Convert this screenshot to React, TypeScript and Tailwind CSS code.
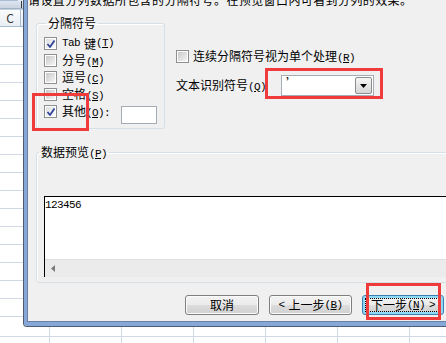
import React from "react";

const cjk = "font-['Noto_Sans_CJK_SC',sans-serif]";
const mono = "font-['Liberation_Mono','Noto_Sans_CJK_SC',monospace] text-[11px] tracking-[-0.6px]";

function Mn({ c }: { c: string }) {
  return (
    <span className={mono}>
      (<span className="underline underline-offset-[1px]">{c}</span>)
    </span>
  );
}

function Check({ checked }: { checked?: boolean }) {
  return (
    <div className="relative w-[13px] h-[13px] shrink-0 border border-[#8e8f8f] bg-white p-[1px]">
      <div
        className={
          checked
            ? "w-full h-full bg-[linear-gradient(135deg,#dedede,#fbfbfb)]"
            : "w-full h-full bg-[linear-gradient(135deg,#c9c9c9,#f5f5f5)]"
        }
      />
      {checked && (
        <svg className="absolute left-[1px] top-[1px]" width="10" height="10" viewBox="0 0 10 10">
          <path d="M1.5 5 L4 8 L8.5 1.5" fill="none" stroke="#30449a" strokeWidth="1.8" strokeLinejoin="round" />
        </svg>
      )}
    </div>
  );
}

function ExcelLeft() {
  const rows = Array.from({ length: 16 });
  return (
    <div className="w-[23px] shrink-0 flex flex-col bg-white overflow-hidden">
      <div className="h-[17px] flex bg-[#e3ebf6]">
        <div className="w-[18px] bg-[#d5e1f0] border-r border-b border-[#a9bcd4] rounded-br-[3px]" />
      </div>
      <div className="h-[8px] bg-[#e3ebf6]" />
      <div className="h-[13px] bg-[linear-gradient(#dde5ef,#c9d4e2)] border-b border-[#a1b1c6] flex justify-end items-center pr-[1px]">
        <div className="w-[1px] h-[7px] bg-[#3a3a3a]" />
      </div>
      <div className="h-[10px] bg-[#f3f5f8] border-b border-[#c6d0dc]" />
      <div className="h-[17px] bg-[linear-gradient(#fafbfc,#e9eef4)] border-b border-[#a8bcd1] flex">
        <div className={`w-[21px] border-r border-[#a8bcd1] flex items-center justify-center text-[12px] text-[#333] ${cjk}`}>
          C
        </div>
      </div>
      <div className="h-[20px] shrink-0 border-b border-[#d0d7e5]" />
      {rows.map((_, i) => (
        <div key={i} className="h-[18px] shrink-0 border-b border-[#d0d7e5]" />
      ))}
    </div>
  );
}

function ExcelBottom() {
  const cols = Array.from({ length: 5 });
  return (
    <div className="h-[16px] flex bg-white overflow-hidden">
      <div className="w-[50px] shrink-0 border-r border-[#d0d7e5]">
        <div className="h-[10px] border-b border-[#d0d7e5]" />
      </div>
      {cols.map((_, i) => (
        <div key={i} className="w-[72px] shrink-0 border-r border-[#d0d7e5]">
          <div className="h-[10px] border-b border-[#d0d7e5]" />
        </div>
      ))}
      <div className="flex-1">
        <div className="h-[10px] border-b border-[#d0d7e5]" />
      </div>
    </div>
  );
}

function Btn({ children, w, focus }: { children: React.ReactNode; w: string; focus?: boolean }) {
  return (
    <div
      className={
        (focus
          ? "border-[#3c7fb1] shadow-[inset_0_0_0_2px_#8fd9f8] "
          : "border-[#7f7f7f] shadow-[inset_0_0_0_1px_#fbfbfb] ") +
        `${w} h-[20px] flex rounded-[3px] border bg-[linear-gradient(#f3f3f3_0%,#ebebeb_48%,#dcdcdc_52%,#d0d0d0_100%)]`
      }
    >
      <div
        className={
          (focus ? "border-dotted border-black " : "border-transparent ") +
          "flex-1 m-[2px] border flex items-center justify-center leading-[12px]"
        }
      >
        {children}
      </div>
    </div>
  );
}

export default function App() {
  return (
    <div className={`relative w-[446px] h-[343px] overflow-hidden bg-white flex flex-col text-[12px] text-black ${cjk}`}>
      <div className="flex h-[327px] shrink-0">
        <ExcelLeft />
        <div className="flex-1 border-l border-b border-[#4f5b6e] rounded-bl-[4px] overflow-hidden">
          <div className="h-full border-l-[3px] border-b-[4px] border-[#86a8d9]">
            <div className="h-full border-l border-b border-[#6a80a2] bg-[#f0f0f0] overflow-hidden flex flex-col">
              <div className="-mt-[6px] h-[12px] leading-[12px] whitespace-nowrap tracking-[0.4px]">
                请设置分列数据所包含的分隔符号。在预览窗口内可看到分列的效果。
              </div>

              <div className="mt-[10px] flex">
                <fieldset className="ml-[8px] w-[129px] h-[113px] shrink-0 border border-[#d5dfe5] rounded-[3px] shadow-[inset_1px_1px_0_#fff] pl-[7px]">
                  <legend className="ml-[2px] px-[2px] leading-[14px] h-[14px]">分隔符号</legend>
                  <div className="pt-[5px] flex flex-col">
                    <div className="h-[17px] flex items-center">
                      <Check checked />
                      <span className="ml-[5px] flex items-center whitespace-nowrap">
                        <span className={mono}>Tab</span>
                        <span className="ml-[4px]">键</span>
                        <Mn c="T" />
                      </span>
                    </div>
                    <div className="h-[17px] flex items-center">
                      <Check />
                      <span className="ml-[5px] whitespace-nowrap">
                        分号<Mn c="M" />
                      </span>
                    </div>
                    <div className="h-[17px] flex items-center">
                      <Check />
                      <span className="ml-[5px] whitespace-nowrap">
                        逗号<Mn c="C" />
                      </span>
                    </div>
                    <div className="h-[17px] flex items-center">
                      <Check />
                      <span className="ml-[5px] whitespace-nowrap">
                        空格<Mn c="S" />
                      </span>
                    </div>
                    <div className="h-[17px] flex items-center">
                      <Check checked />
                      <span className="ml-[5px] w-[59px] shrink-0 whitespace-nowrap">
                        其他<Mn c="O" />
                        <span className={mono}>:</span>
                      </span>
                      <div className="mt-[6px] w-[36px] h-[18px] shrink-0 border border-[#a5acb5] bg-white" />
                    </div>
                  </div>
                </fieldset>

                <div className="ml-[11px] flex flex-col">
                  <div className="mt-[34px] h-[13px] flex items-center">
                    <Check />
                    <span className="ml-[4px] whitespace-nowrap">
                      连续分隔符号视为单个处理<Mn c="R" />
                    </span>
                  </div>
                  <div className="mt-[12px] h-[21px] flex items-center">
                    <span className="w-[105px] shrink-0 whitespace-nowrap">
                      文本识别符号<Mn c="Q" />
                    </span>
                    <div className="w-[93px] h-[21px] shrink-0 border border-[#a5acb5] bg-white flex items-center">
                      <span className="ml-[4px] -mt-[6px] text-[12px] leading-[12px]">’</span>
                      <div className="ml-auto mr-[1px] w-[17px] h-[17px] border border-[#8d8d8d] rounded-[2px] bg-[linear-gradient(#f6f6f6,#d6d6d6)] flex items-center justify-center">
                        <svg width="7" height="4" viewBox="0 0 7 4">
                          <path d="M0 0 H7 L3.5 4 Z" fill="#000" />
                        </svg>
                      </div>
                    </div>
                  </div>
                </div>
              </div>

              <fieldset className="mt-[16px] ml-[8px] w-[430px] h-[138px] shrink-0 border border-[#d5dfe5] rounded-[3px] shadow-[inset_1px_1px_0_#fff]">
                <legend className="ml-[2px] px-[2px] leading-[14px] h-[14px]">
                  数据预览<Mn c="P" />
                </legend>
                <div className="mt-[37px] ml-[7px] h-[81px] border-l border-t border-black bg-white flex flex-col">
                  <div className={`flex-1 pt-[2px] leading-[13px] ${mono}`}>123456</div>
                  <div className="h-[18px] shrink-0 bg-[#ebebeb] border-t border-[#dedede] flex items-center pl-[6px]">
                    <svg width="4" height="7" viewBox="0 0 4 7">
                      <path d="M4 0 V7 L0 3.5 Z" fill="#7a7a7a" />
                    </svg>
                  </div>
                </div>
              </fieldset>

              <div className="mt-[12px] flex justify-end gap-[10px] pr-[2px]">
                <Btn w="w-[74px]">取消</Btn>
                <Btn w="w-[83px]">
                  <span className={mono}>&lt;</span>
                  <span className="ml-[4px]">上一步</span>
                  <Mn c="B" />
                </Btn>
                <Btn w="w-[82px]" focus>
                  <span>下一步</span>
                  <Mn c="N" />
                  <span className={`ml-[4px] ${mono}`}>&gt;</span>
                </Btn>
              </div>
            </div>
          </div>
        </div>
      </div>
      <ExcelBottom />

      <div className="absolute left-[32px] top-[93px] w-[57px] h-[38px] border-[3px] border-[#ef3b3b]" />
      <div className="absolute left-[265px] top-[68px] w-[118px] h-[31px] border-[3px] border-[#ef3b3b]" />
      <div className="absolute left-[366px] top-[283px] w-[75px] h-[37px] border-[3px] border-[#ef3b3b]" />
    </div>
  );
}
